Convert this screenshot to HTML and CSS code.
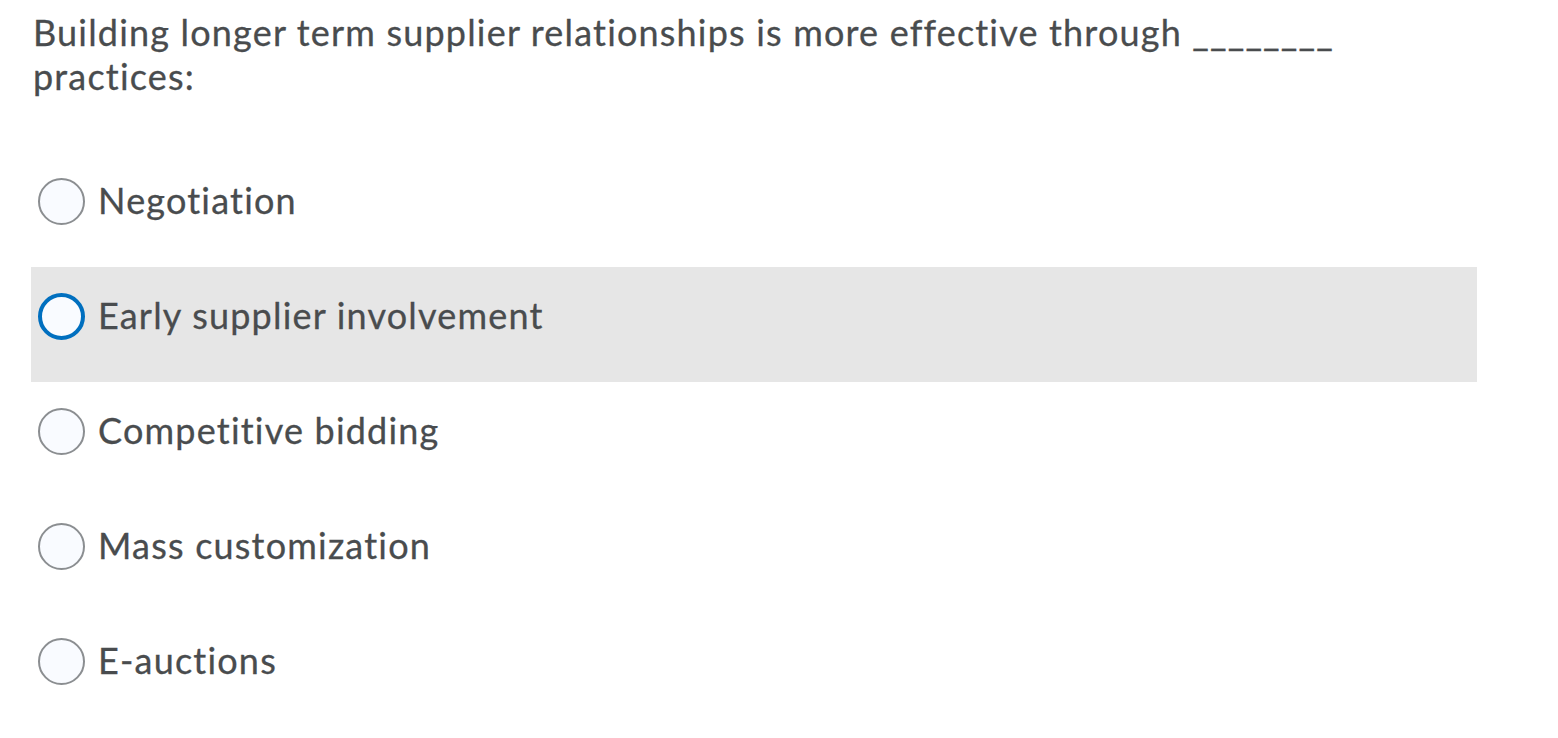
FILE: index.html
```html
<!DOCTYPE html>
<html>
<head>
<meta charset="utf-8">
<link rel="stylesheet" href="styles.css">
</head>
<body>
<div class="question">
  <p class="prompt">Building longer term supplier relationships is more effective through ________ practices:</p>
  <div class="options">
    <label class="option"><span class="radio"></span><span class="label">Negotiation</span></label>
    <label class="option hover"><span class="radio focus"></span><span class="label">Early supplier involvement</span></label>
    <label class="option"><span class="radio"></span><span class="label">Competitive bidding</span></label>
    <label class="option"><span class="radio"></span><span class="label">Mass customization</span></label>
    <label class="option"><span class="radio"></span><span class="label">E-auctions</span></label>
  </div>
</div>
</body>
</html>
```
FILE: styles.css
```css
html, body {
  margin: 0;
  padding: 0;
  background: #ffffff;
}
body {
  font-family: Lato, "Liberation Sans", sans-serif;
  color: #494c4e;
  -webkit-text-stroke: 0.3px #494c4e;
}
.question {
  padding: 11px 0 0 31px;
  width: 1446px;
}
.prompt {
  margin: 0 0 0 2px;
  font-size: 36px;
  line-height: 43.5px;
  letter-spacing: 1.18px;
  width: 1400px;
}
.options {
  margin-top: 54px;
  display: flex;
  flex-direction: column;
}
.option {
  box-sizing: border-box;
  display: flex;
  align-items: flex-start;
  height: 115px;
  padding: 26px 0 0 7px;
  gap: 13px;
  font-size: 36px;
  letter-spacing: 1.2px;
}
.option.hover {
  background: #e6e6e6;
}
.label {
  line-height: 44px;
}
.radio {
  box-sizing: border-box;
  width: 47px;
  height: 47px;
  border-radius: 50%;
  border: 2px solid #8b8e91;
  background: #f9fbff;
  flex: none;
}
.radio.focus {
  border: 4px solid #006fbf;
}
```
